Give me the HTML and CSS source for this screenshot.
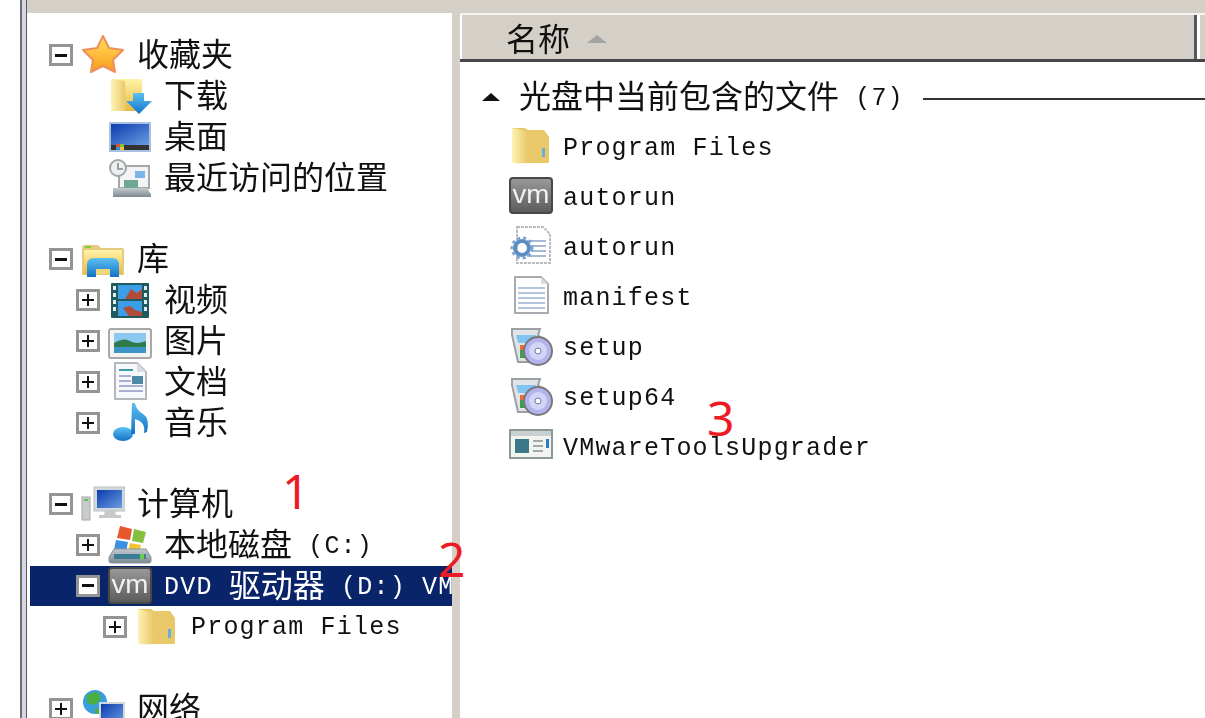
FILE: index.html
```html
<!DOCTYPE html>
<html lang="zh-CN">
<head>
    <meta charset="UTF-8">
    <title>DVD 驱动器 (D:)</title>
    <link rel="stylesheet" href="styles.css">
</head>
<body>
    <svg class="defs" xmlns="http://www.w3.org/2000/svg">
        <defs>
            <linearGradient id="gold" x1="0" y1="0" x2="0" y2="1"><stop offset="0" stop-color="#fff3a8"/><stop offset="1" stop-color="#e8b93f"/></linearGradient>
            <linearGradient id="folderSide" x1="0" y1="0" x2="1" y2="0"><stop offset="0" stop-color="#fdf3b4"/><stop offset="1" stop-color="#e9c767"/></linearGradient>
            <linearGradient id="star" x1="0" y1="0" x2="0" y2="1"><stop offset="0" stop-color="#ffe25c"/><stop offset="1" stop-color="#fb9a1c"/></linearGradient>
            <linearGradient id="blue" x1="0" y1="0" x2="0" y2="1"><stop offset="0" stop-color="#5cc0f2"/><stop offset="1" stop-color="#1273c8"/></linearGradient>
            <linearGradient id="screen" x1="0" y1="0" x2="1" y2="1"><stop offset="0" stop-color="#0c3bb0"/><stop offset="1" stop-color="#6a9ce0"/></linearGradient>
            <linearGradient id="vmFace" x1="0" y1="0" x2="0" y2="1"><stop offset="0" stop-color="#9a9a9a"/><stop offset="1" stop-color="#5a5a5a"/></linearGradient>
            <linearGradient id="steel" x1="0" y1="0" x2="0" y2="1"><stop offset="0" stop-color="#c4ccd2"/><stop offset="1" stop-color="#7c8890"/></linearGradient>

            <symbol id="i-star" viewBox="0 0 44 40">
                <path d="M22 1l6 12 14 2-10 10 2 12-12-6-12 6 2-12L2 15l14-2z" fill="url(#star)" stroke="#ee8f5c" stroke-width="2" stroke-linejoin="round"/>
            </symbol>
            <symbol id="i-download" viewBox="0 0 44 40">
                <path d="M3 3h31v32H3z" fill="url(#gold)"/>
                <path d="M3 3l14 2 1 30H3z" fill="url(#folderSide)"/>
                <path d="M25 17h11v8h8L31 38 18 25h7z" fill="url(#blue)"/>
            </symbol>
            <symbol id="i-desktop" viewBox="0 0 44 40">
                <rect x="1" y="5" width="42" height="30" fill="#a9c0de"/>
                <rect x="3" y="7" width="38" height="21" fill="url(#screen)"/>
                <rect x="3" y="28" width="38" height="5" fill="#333"/>
                <rect x="8" y="27" width="4" height="3" fill="#e0552c"/><rect x="12" y="27" width="4" height="3" fill="#7cc043"/>
                <rect x="8" y="30" width="4" height="3" fill="#3c8ee0"/><rect x="12" y="30" width="4" height="3" fill="#f2c230"/>
            </symbol>
            <symbol id="i-recent" viewBox="0 0 44 40">
                <rect x="11" y="8" width="30" height="22" fill="#f2f4f6" stroke="#a8a8a8" stroke-width="2"/>
                <rect x="27" y="13" width="10" height="7" fill="#7cb4e8"/>
                <rect x="16" y="22" width="14" height="8" fill="#6ea890"/>
                <path d="M5 30h34l4 6v3H5z" fill="url(#steel)"/>
                <circle cx="10" cy="10" r="8" fill="#eef0f2" stroke="#a0a8a8" stroke-width="2"/>
                <path d="M10 5v6h5" fill="none" stroke="#808888" stroke-width="1.5"/>
            </symbol>
            <symbol id="i-library" viewBox="0 0 44 40">
                <path d="M1 8q0-2 2-2h14l3 3h21q2 0 2 2v25H1z" fill="#e7cb7c"/>
                <rect x="3" y="11" width="38" height="24" fill="url(#gold)"/>
                <rect x="4" y="7" width="6" height="2" fill="#7cd040"/>
                <path d="M6 38V26q0-7 7-7h18q7 0 7 7v12H29v-8H15v8z" fill="url(#blue)"/>
                <rect x="15" y="30" width="14" height="5" fill="#eed67c"/>
            </symbol>
            <symbol id="i-video" viewBox="0 0 44 40">
                <rect x="3" y="3" width="38" height="35" rx="1" fill="#1f5a5e"/>
                <rect x="10" y="5" width="24" height="14" fill="#3d9ee8"/>
                <rect x="10" y="21" width="24" height="15" fill="#3d9ee8"/>
                <path d="M17 19l6-10 6 4 5-4v10zM21 36l-6-8 7-2 5 4 7 2v4z" fill="#b04c3c"/>
                <rect x="5" y="6" width="3" height="4" fill="#dfeeee"/><rect x="5" y="13" width="3" height="4" fill="#dfeeee"/><rect x="5" y="20" width="3" height="4" fill="#dfeeee"/><rect x="5" y="27" width="3" height="4" fill="#dfeeee"/>
                <rect x="36" y="6" width="3" height="4" fill="#dfeeee"/><rect x="36" y="13" width="3" height="4" fill="#dfeeee"/><rect x="36" y="20" width="3" height="4" fill="#dfeeee"/><rect x="36" y="27" width="3" height="4" fill="#dfeeee"/>
            </symbol>
            <symbol id="i-picture" viewBox="0 0 44 40">
                <rect x="1" y="8" width="42" height="29" rx="2" fill="#f4f4f4" stroke="#a8a8a8" stroke-width="2"/>
                <rect x="6" y="12" width="32" height="20" fill="#8cc8f0"/>
                <path d="M6 22q10-6 16-2t16 0v6H6z" fill="#2e7c4c"/>
                <rect x="6" y="26" width="32" height="6" fill="#3c94c8"/>
            </symbol>
            <symbol id="i-doc" viewBox="0 0 44 40">
                <path d="M7 1h22l9 9v27H7z" fill="#f6f8fc" stroke="#b4b8bc" stroke-width="2"/>
                <path d="M29 1v9h9z" fill="#d8dce0"/>
                <rect x="11" y="7" width="14" height="2" fill="#3c9ca8"/>
                <path d="M11 14h12M11 19h12M11 24h24M11 29h24" stroke="#a8b0d0" stroke-width="2"/>
                <rect x="24" y="14" width="11" height="8" fill="#4c88a8"/>
            </symbol>
            <symbol id="i-music" viewBox="0 0 44 40">
                <ellipse cx="15" cy="31" rx="10" ry="7" fill="url(#blue)"/>
                <path d="M23 31L24 0h3q1 7 8 11t4 18l-3 1q2-11-9-14v15z" fill="url(#blue)"/>
            </symbol>
            <symbol id="i-computer" viewBox="0 0 44 40">
                <rect x="1" y="13" width="8" height="23" fill="#c8cccc" stroke="#a8a8a8"/>
                <rect x="3" y="15" width="4" height="2" fill="#58c848"/>
                <rect x="13" y="3" width="31" height="24" fill="#d0d8dc" stroke="#b8c0c4"/>
                <rect x="16" y="6" width="25" height="18" fill="url(#screen)"/>
                <path d="M24 27h10l1 4h5v3H18v-3h5z" fill="#c8c8c8"/>
            </symbol>
            <symbol id="i-disk" viewBox="0 0 44 40">
                <path d="M12 1l12 3-2 11-13-2z" fill="#e8562c"/>
                <path d="M26 4l12 3-3 11-11-2z" fill="#84c040"/>
                <path d="M8 15l12 2-2 10-12-2z" fill="#3c90e0"/>
                <path d="M22 18l11 2-2 9-11-2z" fill="#f4c430"/>
                <path d="M6 24h32l5 8v4q0 2-2 2H3q-2 0-2-2v-4z" fill="url(#steel)" stroke="#8c9498"/>
                <rect x="6" y="29" width="32" height="5" fill="#3c7c94"/>
                <rect x="32" y="29" width="4" height="5" fill="#68d048"/>
            </symbol>
            <symbol id="i-vm" viewBox="0 0 44 40">
                <rect x="1" y="2" width="42" height="35" rx="3" fill="url(#vmFace)" stroke="#484848" stroke-width="2"/>
                <text class="vm-mark" x="22" y="27" text-anchor="middle" textLength="37" lengthAdjust="spacingAndGlyphs">vm</text>
            </symbol>
            <symbol id="i-folder" viewBox="0 0 44 40">
                <path d="M4 2h12l3 2h16l5 7v25q0 1-2 1H10z" fill="#e8c868"/>
                <path d="M3 2l14 3 2 32q-16 1-16-1z" fill="url(#folderSide)"/>
                <rect x="33" y="22" width="3" height="9" fill="#68b0d8"/>
            </symbol>
            <symbol id="i-gear" viewBox="0 0 44 40">
                <path d="M8 1h26l7 7v29H8z" fill="#fff" stroke="#b8bcc0" stroke-width="2" stroke-dasharray="3 1"/>
                <path d="M18 15h19M22 20h15M22 25h15M18 30h19" stroke="#a8b8d0" stroke-width="2"/>
                <circle cx="13" cy="22" r="7" fill="none" stroke="#5c8cc4" stroke-width="4"/>
                <circle cx="13" cy="22" r="10" fill="none" stroke="#7ca4d0" stroke-width="3" stroke-dasharray="3 3"/>
                <circle cx="13" cy="22" r="2" fill="#fff"/>
            </symbol>
            <symbol id="i-file" viewBox="0 0 44 40">
                <path d="M6 1h26l7 7v29H6z" fill="#fff" stroke="#a8acb0" stroke-width="2"/>
                <path d="M32 1v7h7z" fill="#d8dce0"/>
                <path d="M9 12h27M9 17h27M9 22h27M9 27h27M9 32h27" stroke="#b4c4dc" stroke-width="2"/>
            </symbol>
            <symbol id="i-setup" viewBox="0 0 44 40">
                <path d="M3 3h28l-2 6 3 3-5 24H9L3 9z" fill="#e0e4e8" stroke="#9ca0a4" stroke-width="2"/>
                <path d="M7 9h20l-2 8H9z" fill="#80c4f0"/>
                <rect x="11" y="19" width="6" height="5" fill="#e86c34"/>
                <rect x="11" y="24" width="6" height="8" fill="#3ca048"/>
                <circle cx="29" cy="25" r="14" fill="#b4b4ec" stroke="#77777c" stroke-width="2"/>
                <circle cx="29" cy="25" r="9" fill="#d4d4f8"/>
                <circle cx="29" cy="25" r="3" fill="#fff" stroke="#7878a0"/>
            </symbol>
            <symbol id="i-app" viewBox="0 0 44 40">
                <rect x="1" y="4" width="42" height="28" fill="#f2f4f0" stroke="#8c9898" stroke-width="2"/>
                <rect x="2" y="5" width="40" height="5" fill="#c8d0d0"/>
                <rect x="6" y="13" width="14" height="14" fill="#3c7888"/>
                <path d="M24 15h10M24 20h10M24 25h10" stroke="#a0a8a8" stroke-width="2"/>
                <rect x="37" y="13" width="3" height="9" fill="#2c7cc0"/>
            </symbol>
            <symbol id="i-network" viewBox="0 0 44 40">
                <circle cx="14" cy="13" r="12" fill="#3c9ce0"/>
                <path d="M6 6q6-4 12-2l2 6-6 6-8-2zM14 19l6 2-2 4-4-1z" fill="#48b040"/>
                <rect x="18" y="13" width="26" height="24" fill="#d0d8dc"/>
                <rect x="20" y="15" width="22" height="20" fill="url(#screen)"/>
            </symbol>
        </defs>
    </svg>

    <div class="screen">
        <div class="gutter"></div>
        <div class="frame"></div>
        <div class="explorer">
            <div class="topband"></div>
            <div class="panes">
                <div class="tree">
                    <div class="row lvl1"><span class="exp minus"></span><svg class="ico"><use href="#i-star"/></svg><span class="label"><span class="cjk">收藏夹</span></span></div>
                    <div class="row lvl2"><span class="exp none"></span><svg class="ico"><use href="#i-download"/></svg><span class="label"><span class="cjk">下载</span></span></div>
                    <div class="row lvl2"><span class="exp none"></span><svg class="ico"><use href="#i-desktop"/></svg><span class="label"><span class="cjk">桌面</span></span></div>
                    <div class="row lvl2"><span class="exp none"></span><svg class="ico"><use href="#i-recent"/></svg><span class="label"><span class="cjk">最近访问的位置</span></span></div>
                    <div class="row-gap"></div>
                    <div class="row lvl1"><span class="exp minus"></span><svg class="ico"><use href="#i-library"/></svg><span class="label"><span class="cjk">库</span></span></div>
                    <div class="row lvl2"><span class="exp plus"></span><svg class="ico"><use href="#i-video"/></svg><span class="label"><span class="cjk">视频</span></span></div>
                    <div class="row lvl2"><span class="exp plus"></span><svg class="ico"><use href="#i-picture"/></svg><span class="label"><span class="cjk">图片</span></span></div>
                    <div class="row lvl2"><span class="exp plus"></span><svg class="ico"><use href="#i-doc"/></svg><span class="label"><span class="cjk">文档</span></span></div>
                    <div class="row lvl2"><span class="exp plus"></span><svg class="ico"><use href="#i-music"/></svg><span class="label"><span class="cjk">音乐</span></span></div>
                    <div class="row-gap"></div>
                    <div class="row lvl1"><span class="exp minus"></span><svg class="ico"><use href="#i-computer"/></svg><span class="label"><span class="cjk">计算机</span></span></div>
                    <div class="row lvl2"><span class="exp plus"></span><svg class="ico"><use href="#i-disk"/></svg><span class="label"><span class="cjk">本地磁盘</span> <span class="lift">(C:)</span></span></div>
                    <div class="row lvl2 selected"><span class="exp minus"></span><svg class="ico"><use href="#i-vm"/></svg><span class="label"><span class="lift">DVD</span> <span class="cjk">驱动器</span> <span class="lift">(D:) VMware Tools</span></span></div>
                    <div class="row lvl3"><span class="exp plus"></span><svg class="ico"><use href="#i-folder"/></svg><span class="label">Program Files</span></div>
                    <div class="row-gap"></div>
                    <div class="row lvl1"><span class="exp plus"></span><svg class="ico"><use href="#i-network"/></svg><span class="label"><span class="cjk">网络</span></span></div>
                </div>
                <div class="splitter"></div>
                <div class="files">
                    <div class="col-head">
                        <div class="col-name"><span class="cjk">名称</span><span class="sort-arrow"></span></div>
                        <div class="col-rest"></div>
                    </div>
                    <div class="group">
                        <span class="group-arrow"></span>
                        <span class="group-title"><span class="cjk">光盘中当前包含的文件</span> <span class="lift">(7)</span></span>
                        <span class="group-line"></span>
                    </div>
                    <div class="item"><svg class="ico"><use href="#i-folder"/></svg><span class="name">Program Files</span></div>
                    <div class="item"><svg class="ico"><use href="#i-vm"/></svg><span class="name">autorun</span></div>
                    <div class="item"><svg class="ico"><use href="#i-gear"/></svg><span class="name">autorun</span></div>
                    <div class="item"><svg class="ico"><use href="#i-file"/></svg><span class="name">manifest</span></div>
                    <div class="item"><svg class="ico"><use href="#i-setup"/></svg><span class="name">setup</span></div>
                    <div class="item"><svg class="ico"><use href="#i-setup"/></svg><span class="name">setup64</span></div>
                    <div class="item"><svg class="ico"><use href="#i-app"/></svg><span class="name">VMwareToolsUpgrader</span></div>
                </div>
            </div>
        </div>
    </div>

    <span class="mark mark-1">1</span>
    <span class="mark mark-2">2</span>
    <span class="mark mark-3">3</span>
</body>
</html>
```

FILE: styles.css
```css
html, body {
    margin: 0;
    padding: 0;
    height: 718px;
    overflow: hidden;
    background-color: #fff;
}

body {
    position: relative;
    font-family: "Liberation Mono", "Noto Sans CJK SC", monospace;
    font-size: 25px;
    line-height: 32px;
    letter-spacing: 1.2px;
    color: #111;
}

.cjk {
    font-family: "Noto Sans CJK SC", sans-serif;
    font-size: 32px;
    letter-spacing: 0;
}

.lift {
    vertical-align: 3px;
}

.defs {
    display: block;
    width: 0;
    height: 0;
}

.vm-mark {
    font-family: "Liberation Sans", sans-serif;
    font-size: 26px;
    letter-spacing: 0;
    fill: #f2f2f2;
}

.screen {
    display: flex;
    height: 718px;
    filter: blur(0.6px);
}

.gutter {
    width: 20px;
    flex: none;
}

.frame {
    width: 4px;
    flex: none;
    background-color: #d5d8e4;
    border-left: 2px solid #6e6e72;
    border-right: 1px solid #5a5a5e;
}

.explorer {
    flex: 1;
    min-width: 0;
    display: flex;
    flex-direction: column;
}

.topband {
    height: 13px;
    flex: none;
    background-color: #d4d0c8;
}

.panes {
    flex: 1;
    min-height: 0;
    display: flex;
}

/* left tree */
.tree {
    width: 425px;
    flex: none;
    box-sizing: border-box;
    padding-top: 21.6px;
    padding-left: 3px;
    overflow: hidden;
}

.row {
    height: 40.85px;
    display: flex;
    align-items: center;
    white-space: nowrap;
}

.row-gap {
    height: 40.85px;
}

.lvl1 { padding-left: 19px; }
.lvl2 { padding-left: 46px; }
.lvl3 { padding-left: 73px; }

.selected {
    background-color: #0a246a;
    color: #fff;
}

.exp {
    width: 24px;
    height: 22px;
    flex: none;
    box-sizing: border-box;
    border: 3px solid #949494;
    background-color: #fff;
    background-repeat: no-repeat;
    background-position: center;
}

.exp.minus {
    background-image: linear-gradient(#111, #111);
    background-size: 12px 3px;
}

.exp.plus {
    background-image: linear-gradient(#111, #111), linear-gradient(#111, #111);
    background-size: 12px 2px, 2px 12px;
}

.exp.none {
    visibility: hidden;
}

.ico {
    width: 44px;
    height: 40px;
    flex: none;
}

.row .ico {
    margin-left: 8px;
}

.label {
    margin-left: 12px;
    padding-top: 2px;
}

.splitter {
    width: 8px;
    flex: none;
    background-color: #d4d0c8;
}

/* right list */
.files {
    flex: 1;
    min-width: 0;
    overflow: hidden;
}

.col-head {
    height: 49px;
    box-sizing: border-box;
    display: flex;
    background-color: #d4d0c8;
    border-top: 2px solid #f6f5f2;
    border-bottom: 3px solid #45454a;
}

.col-name {
    flex: 1;
    display: flex;
    align-items: center;
    padding-left: 44px;
    border-left: 2px solid #fff;
    border-right: 3px solid #58585c;
}

.sort-arrow {
    margin-left: 17px;
    margin-top: 4px;
    border-left: 10px solid transparent;
    border-right: 10px solid transparent;
    border-bottom: 8px solid #a4a4a4;
}

.col-rest {
    width: 5px;
    flex: none;
    border-left: 3px solid #fff;
}

.group {
    height: 40px;
    margin-top: 14px;
    margin-bottom: 7px;
    padding-left: 22px;
    display: flex;
    align-items: center;
    white-space: nowrap;
}

.group-arrow {
    flex: none;
    margin-top: 2px;
    border-left: 9px solid transparent;
    border-right: 9px solid transparent;
    border-bottom: 8px solid #111;
}

.group-title {
    margin-left: 19px;
    padding-top: 3px;
}

.group-line {
    flex: 1;
    height: 2px;
    margin-left: 19px;
    margin-top: 5px;
    background-color: #333;
}

.item {
    height: 50px;
    padding-left: 49px;
    display: flex;
    align-items: center;
    white-space: nowrap;
}

.item .ico {
    margin-right: 10px;
    margin-bottom: 4px;
}

.name {
    padding-top: 2px;
}

/* red numbers pasted over the screenshot */
.mark {
    position: absolute;
    font-family: "Noto Sans", sans-serif;
    font-size: 48px;
    line-height: 50px;
    letter-spacing: 0;
    color: #ed1c24;
}

.mark-1 { left: 282px; top: 466px; }
.mark-2 { left: 438px; top: 534px; }
.mark-3 { left: 707px; top: 393px; }
```
